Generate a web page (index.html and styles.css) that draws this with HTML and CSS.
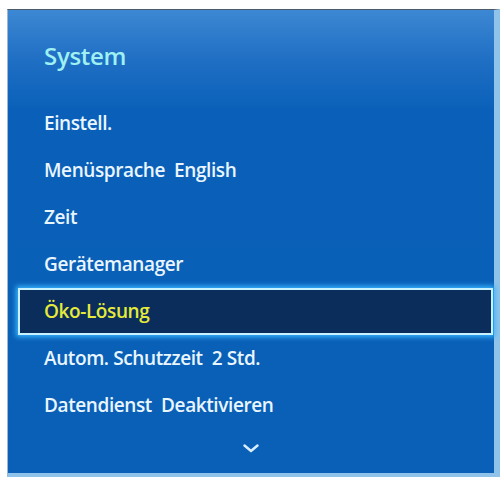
FILE: index.html
```html
<!DOCTYPE html>
<html lang="de">
<head>
<meta charset="utf-8">
<title>System</title>
<link rel="stylesheet" href="styles.css">
</head>
<body>
<div class="panel">
  <div class="title">System</div>
  <ul class="menu">
    <li class="item">Einstell.</li>
    <li class="item">Menüsprache&nbsp; English</li>
    <li class="item">Zeit</li>
    <li class="item">Gerätemanager</li>
    <li class="item selected">Öko-Lösung</li>
    <li class="item">Autom. Schutzzeit&nbsp; 2 Std.</li>
    <li class="item">Datendienst&nbsp; Deaktivieren</li>
  </ul>
  <div class="more">
    <svg width="16" height="9" viewBox="0 0 16 9"><path d="M1.5 1.5 L8 7 L14.5 1.5" fill="none" stroke="#dbeeff" stroke-width="2.4" stroke-linecap="round" stroke-linejoin="round"/></svg>
  </div>
</div>
</body>
</html>
```
FILE: styles.css
```css
html, body {
  margin: 0;
  padding: 0;
  background: #ffffff;
}
body {
  font-family: "Open Sans", "DejaVu Sans", sans-serif;
}
.panel {
  box-sizing: border-box;
  margin: 9px 0 0 7px;
  width: 493px;
  height: 468px;
  border-top: 1px solid #4d5a68;
  border-left: 1px solid #9fb6cf;
  border-right: 6px solid #8fc3ea;
  border-bottom: 4px solid #8fc3ea;
  background: linear-gradient(to bottom, #3d88d3 0px, #1f6fc4 50px, #0a60b8 100px, #0960b6 100%);
  display: flex;
  flex-direction: column;
}
.title {
  color: #9ff0f2;
  font-size: 24px;
  font-weight: 600;
  padding: 31px 0 0 36px;
  height: 59px;
  line-height: 30px;
  letter-spacing: -0.3px;
}
.menu {
  list-style: none;
  margin: 0;
  padding: 0 1px 0 10px;
}
.item {
  box-sizing: border-box;
  height: 47px;
  line-height: 47px;
  padding-left: 26px;
  color: #eaf6ff;
  font-size: 19px;
  font-weight: 600;
  letter-spacing: -0.4px;
  white-space: nowrap;
}
.selected {
  background: #0a2d5c;
  color: #e6ea3a;
  border: 2px solid #c8f2ff;
  line-height: 43px;
  padding-left: 24px;
  box-shadow: 0 0 5px 2px #38b4ff;
}
.more {
  display: flex;
  justify-content: center;
  padding-top: 15px;
}
```
